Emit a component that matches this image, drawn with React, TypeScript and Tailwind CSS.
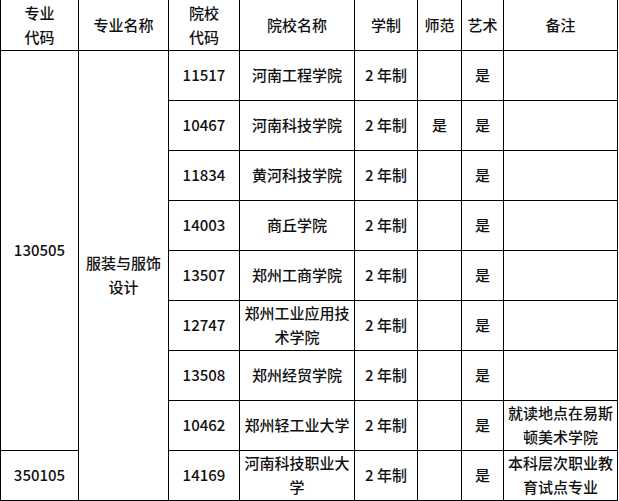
const rows = [
  { code: "11517", name: "河南工程学院", normal: "", note: "" },
  { code: "10467", name: "河南科技学院", normal: "是", note: "" },
  { code: "11834", name: "黄河科技学院", normal: "", note: "" },
  { code: "14003", name: "商丘学院", normal: "", note: "" },
  { code: "13507", name: "郑州工商学院", normal: "", note: "" },
  { code: "12747", name: "郑州工业应用技术学院", normal: "", note: "" },
  { code: "13508", name: "郑州经贸学院", normal: "", note: "" },
  { code: "10462", name: "郑州轻工业大学", normal: "", note: "就读地点在易斯顿美术学院" },
  { code: "14169", name: "河南科技职业大学", normal: "", note: "本科层次职业教育试点专业" },
];

const cell = "border border-black px-1 text-center align-middle";

export default function App() {
  return (
    <div className="bg-white w-[619px] h-[501px] overflow-hidden">
      <table
        className="table-fixed border-collapse text-[15px] leading-6 font-medium text-[#111]"
        style={{ fontFamily: '"Noto Sans CJK SC", "Noto Sans", sans-serif' }}
      >
        <colgroup>
          <col className="w-[78px]" />
          <col className="w-[90px]" />
          <col className="w-[71px]" />
          <col className="w-[115px]" />
          <col className="w-[63px]" />
          <col className="w-[44px]" />
          <col className="w-[42px]" />
          <col className="w-[114px]" />
        </colgroup>
        <thead>
          <tr className="h-[50px]">
            <th className={`${cell} border-t-0 font-medium`}>专业<br />代码</th>
            <th className={`${cell} border-t-0 font-medium`}>专业名称</th>
            <th className={`${cell} border-t-0 font-medium`}>院校<br />代码</th>
            <th className={`${cell} border-t-0 font-medium`}>院校名称</th>
            <th className={`${cell} border-t-0 font-medium`}>学制</th>
            <th className={`${cell} border-t-0 font-medium px-0`}>师范</th>
            <th className={`${cell} border-t-0 font-medium px-0`}>艺术</th>
            <th className={`${cell} border-t-0 font-medium`}>备注</th>
          </tr>
        </thead>
        <tbody>
          {rows.map((r, i) => (
            <tr key={r.code} className="h-[50px]">
              {i === 0 && (
                <td rowSpan={8} className={cell}>130505</td>
              )}
              {i === 8 && <td className={cell}>350105</td>}
              {i === 0 && (
                <td rowSpan={9} className={cell}>服装与服饰<br />设计</td>
              )}
              <td className={cell}>{r.code}</td>
              <td className={cell}>{r.name}</td>
              <td className={cell}>2 年制</td>
              <td className={cell}>{r.normal}</td>
              <td className={cell}>是</td>
              <td className={cell}>{r.note}</td>
            </tr>
          ))}
        </tbody>
      </table>
    </div>
  );
}
